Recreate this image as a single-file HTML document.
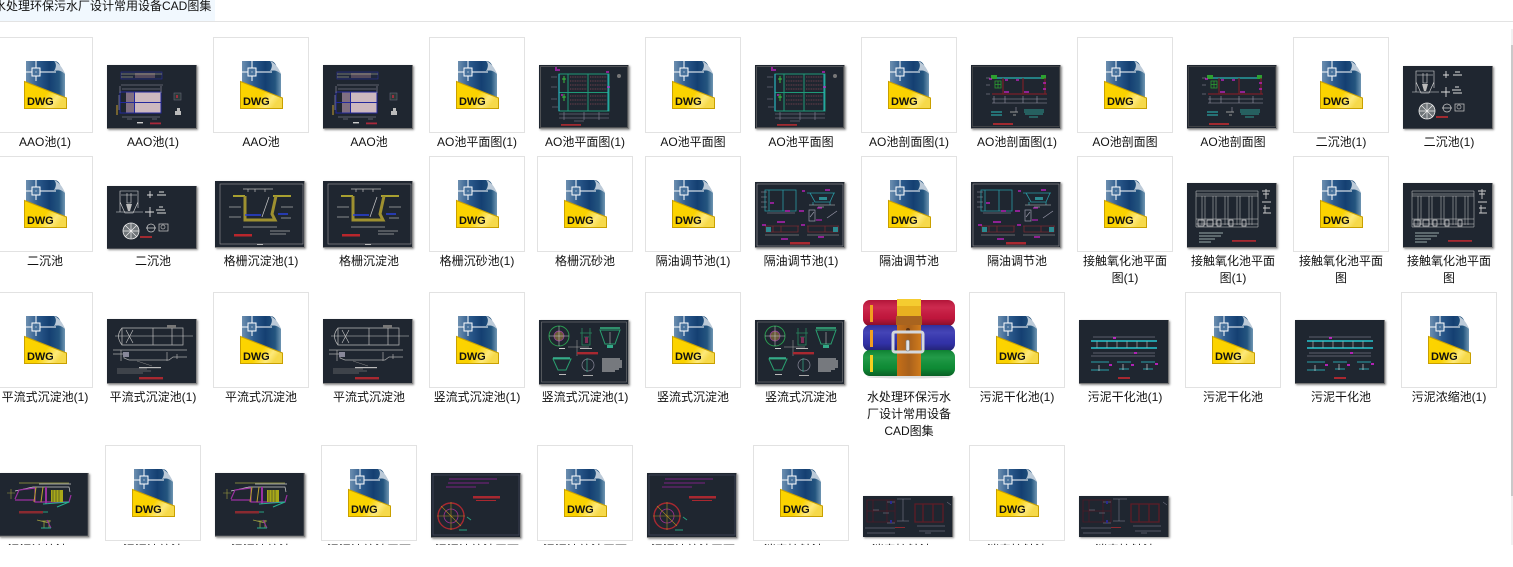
<!DOCTYPE html>
<html lang="zh"><head><meta charset="utf-8"><title>水处理环保污水厂设计常用设备CAD图集</title>
<style>
html,body{margin:0;padding:0;width:1513px;height:567px;overflow:hidden;background:#fff}
body{position:relative;font-family:"Liberation Sans","Noto Sans CJK SC",sans-serif;font-size:12px;color:#000}
#tab{position:absolute;left:0;top:0;width:215px;height:21px;background:#f1f8fe;overflow:hidden}
#tab span{position:absolute;left:-6px;top:-2px;line-height:17px;white-space:nowrap;color:#111}
#line{position:absolute;left:0;top:21px;width:1513px;height:1px;background:#e3e3e3}
#view{position:absolute;left:0;top:22px;width:1511px;height:523px;overflow:hidden}
#in{position:absolute;left:0;top:-22px;width:1511px;height:545px;overflow:hidden}
.c{position:absolute;width:94px;height:94px;border:1px solid #e2e2e2;background:#fff}
.c svg{position:absolute;left:26px;top:23px;width:43px;height:48px}
.t{position:absolute;width:90px;height:64px;box-shadow:1px 1px 2px rgba(0,0,0,.45);filter:blur(.3px);display:block}
.l{position:absolute;width:108px;margin-top:1px;text-align:center;line-height:17px;white-space:nowrap;color:#111}
.e{height:4px;overflow:hidden}
#sb1{position:absolute;left:1511px;top:29px;width:2px;height:516px;background:#f1f1f1}
#sb2{position:absolute;left:1511px;top:45px;width:2px;height:451px;background:#c9c9c9}
#rar{position:absolute;left:861px;top:296px;width:96px;height:86px}
</style></head><body>
<svg width="0" height="0" style="position:absolute"><defs>
<linearGradient id="bl" x1="0" y1="0" x2="1" y2="0"><stop offset="0" stop-color="#6d8fb0"/><stop offset=".3" stop-color="#2c5a8c"/><stop offset=".6" stop-color="#143f72"/><stop offset=".85" stop-color="#24557f"/><stop offset="1" stop-color="#6f96b2"/></linearGradient>
<linearGradient id="ye" x1="0" y1="0" x2="1" y2=".5"><stop offset="0" stop-color="#fdd400"/><stop offset=".6" stop-color="#fad200"/><stop offset=".85" stop-color="#fde97a"/><stop offset="1" stop-color="#f6d94a"/></linearGradient>
<linearGradient id="cy" x1="0" y1="0" x2="0" y2="1"><stop offset="0" stop-color="#000" stop-opacity=".12"/><stop offset=".3" stop-color="#fff" stop-opacity=".08"/><stop offset=".7" stop-color="#000" stop-opacity=".05"/><stop offset="1" stop-color="#000" stop-opacity=".35"/></linearGradient>
<linearGradient id="be" x1="0" y1="0" x2="1" y2="0"><stop offset="0" stop-color="#c66f17"/><stop offset=".5" stop-color="#a9611c"/><stop offset="1" stop-color="#d07b1c"/></linearGradient>
<g id="d">
<path d="M2 0H30C34 0 36 3 37 7C38 9 40 10 41 13V36H2Z" fill="url(#bl)"/>
<path d="M30 0C34 1 39 7 41 13C37 9 33 9 30 10C32 7 33 3 30 0Z" fill="#bccad8"/>
<path d="M12 0V7M12 15V20M2 11H8M16 11H32" stroke="#fff" stroke-width="1"/>
<rect x="8" y="7" width="8" height="8" fill="#48729c" stroke="#fff" stroke-width="1"/><rect x="11.500" y="10.500" width="1" height="1" fill="#fff"/>
<path d="M.5 20.500L42.500 37V47.500H.5Z" fill="url(#ye)" stroke="#c9a000"/>
<text x="3" y="44" font-family="Liberation Sans" font-weight="700" font-size="11" fill="#111" letter-spacing="-.1">DWG</text>
</g>
<g id="aao"><rect width="90" height="64" fill="#1f2630"/><path d="M89.500 0V63.500H0" stroke="#777" fill="none"/>
<rect x="14" y="7" width="41" height="7" fill="#20283c" stroke="#2b2f9a" stroke-width=".6"/><path d="M29 8v5M31 8v5M33 8v5M35 8v5M37 8v5M39 8v5M41 8v5M43 8v5M45 8v5M47 8v5" stroke="#b58a96" stroke-width=".7"/><path d="M14 9h41M14 12h12" stroke="#c9c9a0" stroke-width=".5"/>
<rect x="19" y="27" width="9" height="21" fill="#806f82"/><rect x="28" y="27" width="26" height="21" fill="#cdb9bf"/><path d="M13 27H54V48H13ZM13 37.500H54M27.500 27V48" stroke="#23289c" fill="none"/>
<path d="M14 20h42M15 24h38M15 52h38M13 21v7M54 21v7M20 54h5M45 54h5M12 30v15" stroke="#99a" stroke-width=".6"/><path d="M10 40v10" stroke="#c9a030"/>
<rect x="67" y="28" width="7" height="7" fill="#2c3a3a" stroke="#667" stroke-width=".6"/><rect x="69" y="30" width="2" height="3" fill="#9a3040"/><path d="M68 46h6v4h-6zM70 43h3v3h-3z" fill="#bbb"/>
<rect x="30" y="57" width="6" height="1.400" fill="#ccc"/><rect x="43" y="57.500" width="11" height="1.800" fill="#a8283a"/></g>
<g id="aop"><rect width="90" height="64" fill="#1f2630"/><rect x="1.500" y="1.500" width="87" height="61" fill="none" stroke="#666" stroke-width=".7"/><path d="M89.500 0V63.500H0" stroke="#888" fill="none"/>
<path d="M20 9H70V46H20ZM29 9V46M49 9V46M20 27.500H70" stroke="#1f9a78" fill="none" stroke-width="1"/>
<path d="M31 12h17M31 16h17M31 20h17M31 24h17M31 31h17M31 35h17M31 39h17M51 12h17M51 16h17M51 20h17M51 24h17M51 31h17M51 35h17M51 39h17" stroke="#8a4a55" stroke-width=".7" stroke-dasharray="1 .7"/>
<path d="M20 9v37" stroke="#29b5c0" stroke-width="1.200"/><path d="M23 14h4M25 11v7M23 32h4M25 29v7" stroke="#38c040"/><path d="M69 9v37" stroke="#29b5c0"/>
<path d="M16 5h5M67 7h3M68 22h3M22 30h2M16 3h2" stroke="#d020d0" stroke-width="1.200"/><path d="M12 12h6M12 22h6M12 34h6M13 42h6M20 49h50M20 53h50M25 47v8M45 47v8M60 47v8M35 56h10" stroke="#889" stroke-width=".6"/>
<rect x="22" y="59" width="20" height="1.800" fill="#a02a30"/><circle cx="80" cy="11" r="2" fill="#777"/></g>
<g id="aos"><rect width="90" height="64" fill="#1f2630"/><rect x="1.500" y="1.500" width="87" height="60" fill="none" stroke="#555" stroke-width=".6"/><path d="M89.500 0V63.500H0" stroke="#888" fill="none"/>
<path d="M21 13H75" stroke="#27b5b5" stroke-width="1.200"/><rect x="20" y="10" width="6" height="4" fill="#2da030"/><rect x="70" y="10" width="5" height="4" fill="#2da030"/><path d="M24 16h6v7h-6zM24 19.500h6M27 16v7" stroke="#2da030" fill="none" stroke-width=".8"/>
<path d="M21 29H76M32 13V29M52 13V29M74 13V29" stroke="#7a1f28" stroke-width="1.200"/><path d="M18 14h3M34 15h3M45 15h3M33 27h5M53 27h5M72 18h3M72 24h3" stroke="#d020d0" stroke-width="1.200"/>
<path d="M21 34H76M21 38H76M23 31v7M34 31v7M52 31v7M66 31v7M42 38h10M15 13h4M15 20h4M15 29h4M45 42v5" stroke="#99a" stroke-width=".6"/>
<path d="M20 47h11M20 50h11" stroke="#29a0a0" stroke-width="1.300"/><path d="M39 47h8M42 50h3" stroke="#999"/><path d="M53 45h20M53 47h20M54 49h18M58 52h9" stroke="#2c9a90" stroke-width=".9"/><rect x="22" y="58" width="20" height="2" fill="#a02a30"/></g>
<g id="ec"><rect width="90" height="63" fill="#1f2630"/><path d="M89.500 0V63H0" stroke="#777" fill="none"/>
<path d="M13 5H31V16L26 27H18L13 16ZM20 7V17H24V7M14 9H30M9 26H36M13 5V26M31 5V22" stroke="#ddd" stroke-width=".6" fill="none"/><path d="M19 18h6l-2 7h-2z" fill="#bbb"/>
<circle cx="24" cy="45" r="8" fill="#6e7478" stroke="#eee" stroke-width=".8"/><path d="M16 45h16M24 37v16M18 39l12 12M30 39l-12 12" stroke="#eee" stroke-width=".7"/>
<path d="M40 9h6M43 5v7M50 9h9M52 6h5M38 26h9M43 21v10M49 24h9M50 27h9M52 21h4" stroke="#ddd" stroke-width=".9"/><circle cx="44" cy="42" r="4" fill="none" stroke="#ccc" stroke-width=".7"/><path d="M39 42h10" stroke="#ddd" stroke-width=".7"/><rect x="52" y="38" width="9" height="7" fill="none" stroke="#ccc" stroke-width=".7"/><circle cx="56" cy="41" r="2" fill="none" stroke="#bbb" stroke-width=".7"/>
<rect x="33" y="50" width="12" height="2" fill="#a02a30"/></g>
<g id="gs"><rect width="90" height="67" fill="#1f2630"/><rect x="5" y="3" width="83" height="60" fill="none" stroke="#999" stroke-width=".6"/><path d="M89.500 0V66.500H0" stroke="#888" fill="none"/>
<path d="M18 15H30M58 15H76" stroke="#a8a030" stroke-width="2"/><path d="M30 15V39H60L57 33L61 15" fill="none" stroke="#9e9030" stroke-width="3"/><path d="M32 17V36H48L55 28V17" fill="#1f2630"/>
<path d="M28 8h30M33 8v3M40 8v3M50 8v3" stroke="#bbb" stroke-width=".7"/><path d="M30 34H46M63 33h10" stroke="#2840d8" stroke-width="1.500"/><path d="M54 16L47 36" stroke="#ccc" stroke-width=".7"/><path d="M14 26h12M14 36h12M66 26h12M66 37h10M28 46h34M55 50h20M55 53h16" stroke="#aaa" stroke-width=".7"/><rect x="19" y="53" width="18" height="2.500" fill="#b8262c"/><rect x="42" y="63" width="6" height="1" fill="#bbb"/></g>
<g id="gy"><rect width="90" height="66" fill="#1f2630"/><rect x="2" y="2" width="86" height="62" fill="none" stroke="#999" stroke-width=".6"/><path d="M89.500 0V65.500H0" stroke="#888" fill="none"/>
<path d="M10 8H41V29H10ZM28 8V29M14 8V29" stroke="#2a9aa5" fill="none" stroke-width=".8"/><path d="M6 10h6M6 15h6M6 20h6M6 25h6M12 31h28" stroke="#99a" stroke-width=".6"/><path d="M15 21h4M30 29h5M44 29h5M47 9h3M70 8h5M22 40h8" stroke="#d020d0" stroke-width="1.200"/>
<path d="M52 11H80M55 11L60 20H75L79 11M58 20v3M75 20v3" stroke="#2a9aa5" fill="none" stroke-width=".8"/><rect x="64" y="15" width="8" height="3" fill="#2c8a90"/><path d="M54 23H80M63 25h6" stroke="#ccc" stroke-width=".5"/><path d="M62 26h5" stroke="#d020d0"/>
<path d="M54 28h6v11h-6zM55 35l4-5M72 36l10-7" stroke="#99a" fill="none" stroke-width=".7"/><path d="M61 38h6" stroke="#d020d0"/>
<path d="M10 44H44M11 44V50H43V44M18 44V50M26 44V50M52 44H84M53 44V50H83V44M70 44V50" stroke="#7a2a30" fill="none" stroke-width=".8"/><path d="M11 45h5v5h-5zM78 45h5v5h-5z" fill="#2c8a90"/><path d="M10 53H44M52 53H84" stroke="#aaa" stroke-width=".6"/><path d="M26 57h7M63 55h6M7 43h4M46 43h4" stroke="#d020d0" stroke-width="1.200"/><rect x="35" y="60" width="20" height="2.500" fill="#a82830"/></g>
<g id="jc"><rect width="90" height="65" fill="#1f2630"/><path d="M89.500 0V64.500H0" stroke="#888" fill="none"/>
<path d="M9 8H71V44H9ZM9 11H71M9 13H71M15 13V42M18 13V42M26 13V42M29 13V42M38 13V42M41 13V42M50 13V42M53 13V42M62 13V42M65 13V42M9 36H71M9 41H71" stroke="#ccc" stroke-width=".5" fill="none"/><path d="M11 37h6v6h-6zM20 37h6v6h-6zM30 37h4v6h-4zM42 37h4v6h-4zM55 37h4v6h-4z" stroke="#ddd" fill="none" stroke-width=".7"/>
<path d="M75 8h8M79 6v10M76 11h6M75 19h9M76 25h7M76 30h8M78 22v8" stroke="#ccc" stroke-width=".9"/><path d="M12 50H36M12 53H34M12 56H28M12 59H24" stroke="#9aa" stroke-width="1"/><rect x="45" y="57" width="24" height="1.800" fill="#a82830"/></g>
<g id="pl"><rect width="90" height="65" fill="#1f2630"/><path d="M89.500 0V64.500H0" stroke="#888" fill="none"/>
<path d="M15 9H65V26H15ZM15 9Q8 17 15 26M65 9H76V26H65M46 9V26" stroke="#bbb" fill="none" stroke-width=".7"/><path d="M19 11L26 24M26 11L19 24M8 17H86" stroke="#ccc" stroke-width=".6"/><rect x="60" y="6" width="9" height="3" fill="#777"/>
<path d="M6 35H17V39L22 41H62L66 38H80M6 31H80M14 31V42M60 33V42M70 35V40" stroke="#aaa" fill="none" stroke-width=".7"/><path d="M16 33h6v5h-6z" fill="#889"/><path d="M30 42L45 47" stroke="#888" stroke-width=".5"/>
<rect x="32" y="48" width="22" height="1.200" fill="#bbb"/><path d="M10 50H40M10 52H44M10 54H36" stroke="#999" stroke-width=".6"/><rect x="32" y="58" width="24" height="2.400" fill="#a82830"/></g>
<g id="sl"><rect width="90" height="65" fill="#1f2630"/><rect x="2.500" y="2" width="85" height="60" fill="none" stroke="#888" stroke-width=".5"/><path d="M89.500 0V64.500H0" stroke="#888" fill="none"/>
<circle cx="20" cy="16" r="10" fill="none" stroke="#2a9a50" stroke-width="1"/><circle cx="20" cy="16" r="5" fill="#6a5a38" stroke="#9a40a0" stroke-width=".7"/><path d="M10 16H30M20 6V26" stroke="#ccc" stroke-width=".5"/><rect x="20" y="28" width="6" height="1" fill="#ccc"/>
<path d="M43 8V25H51V8M41 13H53M45 17H50" stroke="#2a8a60" fill="none" stroke-width=".8"/><path d="M46 17h3v6h-3z" fill="#803058"/><rect x="41" y="28" width="12" height="1" fill="#bbb"/>
<path d="M61 10H81L76 24H66Z" fill="none" stroke="#2aa070" stroke-width="1"/><path d="M61 8H81" stroke="#36b080" stroke-width="1.600"/><path d="M71 12V24" stroke="#bbb" stroke-width=".6"/><path d="M68 25h6v3h-6z" fill="#3a8"/>
<path d="M29 27H50M38 20V36" stroke="#aaa" stroke-width=".5"/><rect x="38" y="32" width="21" height="2.400" fill="#a82830"/>
<path d="M14 39H32L27 50H19Z" fill="none" stroke="#2aa070" stroke-width="1"/><path d="M14 38H31" stroke="#38b090" stroke-width="1.600"/><rect x="20" y="54" width="7" height="1" fill="#bbb"/>
<circle cx="49" cy="45" r="6" fill="none" stroke="#889" stroke-width=".7"/><path d="M48 38V52" stroke="#3a8" stroke-width=".7"/><rect x="44" y="55" width="10" height="1" fill="#aaa"/>
<path d="M63 39H81M63 41H83M63 43H83M63 45H83M63 47H83M63 49H80M63 51H76" stroke="#ccc" stroke-width=".9"/></g>
<g id="gh"><rect width="90" height="64" fill="#1f2630"/><path d="M89.500 0V63.500H0" stroke="#777" fill="none"/>
<path d="M12 21H78M12 28H78" stroke="#27c5d0" stroke-width="1.500"/><path d="M18 21v7M28 21v7M38 21v7M48 21v7M58 21v7M68 21v7" stroke="#aaa" stroke-width=".7"/><path d="M14 17h62M14 33h62M12 36h64" stroke="#99a" stroke-width=".5"/><path d="M12 42h18M12 50h18M38 42h14M40 49h10M62 42h14M64 49h10" stroke="#29a0a8" stroke-width=".9"/>
<path d="M20 45v6M44 44v6M68 44v6" stroke="#ccc" stroke-width=".7"/><path d="M34 18h3M55 33h3M30 45h3M52 45h3M76 44h3" stroke="#e020e0" stroke-width="1.500"/><rect x="39" y="57" width="12" height="2" fill="#a82830"/></g>
<g id="wn"><rect width="90" height="64" fill="#1f2630"/><path d="M89.500 0V63.500H0" stroke="#888" stroke-width="1.500" fill="none"/>
<path d="M20 10H70" stroke="#a0a040" stroke-width=".7"/><path d="M40 11H72M16 18L34 14H70L71 19" stroke="#ccc" fill="none" stroke-width=".7"/><path d="M16 26L20 17L36 15M36 15L36 29H70L72 22M16 27H36" stroke="#9a30a0" fill="none" stroke-width="1.200"/><rect x="52" y="17" width="12" height="12" fill="#a8a818"/><path d="M54 17v12M57 17v12M60 17v12" stroke="#1f2630" stroke-width=".5"/><path d="M37 14L35 29M44 14L42 29" stroke="#bba030"/><path d="M47 14V31" stroke="#9a30a0" stroke-width="2"/><path d="M44 31L70 29L58 34" stroke="#27b090" fill="none"/><path d="M12 16V26M8 20h8" stroke="#a0a040" stroke-width=".6"/>
<rect x="20" y="38" width="24" height="2.500" fill="#8a2a30"/><path d="M44 39h5" stroke="#27a080"/><path d="M38 47L50 50M42 48H52M45 49V55M50 47V55" stroke="#a0a040" stroke-width=".8"/><path d="M48 47l4 8" stroke="#9a30a0"/><path d="M42 55H52" stroke="#27b090"/></g>
<g id="wp"><rect width="90" height="65" fill="#1f2630"/><rect x="2" y="2" width="86" height="60" fill="none" stroke="#444a60" stroke-width=".7"/><path d="M89.500 0V64.500H0" stroke="#888" fill="none"/>
<circle cx="20" cy="43" r="13" fill="none" stroke="#a82830" stroke-width="1.400"/><circle cx="20" cy="43" r="7" fill="none" stroke="#a03090" stroke-width=".8"/><path d="M20 29V57M6 43H34M10 33L30 53" stroke="#b09020" stroke-width=".6"/><path d="M17 10L58 10M15 14L45 14M18 6H66" stroke="#9a20a0" stroke-width=".8"/><path d="M36 44l4 3M28 57h8" stroke="#27a080"/><rect x="42" y="23" width="27" height="2.500" fill="#a82830"/><rect x="45" y="27" width="20" height="1" fill="#a82830"/></g>
<g id="xd"><rect width="90" height="41" fill="#1f2630"/><path d="M89.500 0V41" stroke="#666" fill="none"/>
<path d="M4 4H32V26H4ZM10 4V26M24 4V26M4 15H32" stroke="#4e1a26" fill="none" stroke-width=".8"/><path d="M52 8H80V26H52ZM60 8V26M70 8V26" stroke="#5e1c26" fill="none" stroke-width="1.300"/><path d="M10 14h6M20 17h6M24 6h8M24 27h8M40 3V25M34 3h14M34 25h12M54 30h28M56 35h26M2 32h30M4 37h28M62 37h6M84 6l4 3" stroke="#889" stroke-width=".5"/><rect x="32" y="31" width="10" height="1" fill="#8a2a30"/><rect x="27" y="5" width="2" height="3" fill="#2a2a90"/><rect x="27" y="24" width="2" height="3" fill="#2a2a90"/></g>
</defs></svg>

<div id="tab"><span>水处理环保污水厂设计常用设备CAD图集</span></div>
<div id="line"></div>
<div id="view"><div id="in">
<!-- row 1 -->
<div class="c" style="left:-3px;top:37px"><svg viewBox="0 0 43 48"><use href="#d"/></svg></div><div class="l" style="left:-9px;top:133px">AAO池(1)</div>
<svg class="t" style="left:107px;top:65px" viewBox="0 0 90 64" preserveAspectRatio="none"><use href="#aao"/></svg><div class="l" style="left:99px;top:133px">AAO池(1)</div>
<div class="c" style="left:213px;top:37px"><svg viewBox="0 0 43 48"><use href="#d"/></svg></div><div class="l" style="left:207px;top:133px">AAO池</div>
<svg class="t" style="left:323px;top:65px" viewBox="0 0 90 64" preserveAspectRatio="none"><use href="#aao"/></svg><div class="l" style="left:315px;top:133px">AAO池</div>
<div class="c" style="left:429px;top:37px"><svg viewBox="0 0 43 48"><use href="#d"/></svg></div><div class="l" style="left:423px;top:133px">AO池平面图(1)</div>
<svg class="t" style="left:539px;top:65px" viewBox="0 0 90 64" preserveAspectRatio="none"><use href="#aop"/></svg><div class="l" style="left:531px;top:133px">AO池平面图(1)</div>
<div class="c" style="left:645px;top:37px"><svg viewBox="0 0 43 48"><use href="#d"/></svg></div><div class="l" style="left:639px;top:133px">AO池平面图</div>
<svg class="t" style="left:755px;top:65px" viewBox="0 0 90 64" preserveAspectRatio="none"><use href="#aop"/></svg><div class="l" style="left:747px;top:133px">AO池平面图</div>
<div class="c" style="left:861px;top:37px"><svg viewBox="0 0 43 48"><use href="#d"/></svg></div><div class="l" style="left:855px;top:133px">AO池剖面图(1)</div>
<svg class="t" style="left:971px;top:65px" viewBox="0 0 90 64" preserveAspectRatio="none"><use href="#aos"/></svg><div class="l" style="left:963px;top:133px">AO池剖面图(1)</div>
<div class="c" style="left:1077px;top:37px"><svg viewBox="0 0 43 48"><use href="#d"/></svg></div><div class="l" style="left:1071px;top:133px">AO池剖面图</div>
<svg class="t" style="left:1187px;top:65px" viewBox="0 0 90 64" preserveAspectRatio="none"><use href="#aos"/></svg><div class="l" style="left:1179px;top:133px">AO池剖面图</div>
<div class="c" style="left:1293px;top:37px"><svg viewBox="0 0 43 48"><use href="#d"/></svg></div><div class="l" style="left:1287px;top:133px">二沉池(1)</div>
<svg class="t" style="left:1403px;top:66px;height:63px" viewBox="0 0 90 63" preserveAspectRatio="none"><use href="#ec"/></svg><div class="l" style="left:1395px;top:133px">二沉池(1)</div>
<!-- row 2 -->
<div class="c" style="left:-3px;top:156px"><svg viewBox="0 0 43 48"><use href="#d"/></svg></div><div class="l" style="left:-9px;top:252px">二沉池</div>
<svg class="t" style="left:107px;top:186px;height:63px" viewBox="0 0 90 63" preserveAspectRatio="none"><use href="#ec"/></svg><div class="l" style="left:99px;top:252px">二沉池</div>
<svg class="t" style="left:215px;top:181px;height:67px" viewBox="0 0 90 67" preserveAspectRatio="none"><use href="#gs"/></svg><div class="l" style="left:207px;top:252px">格栅沉淀池(1)</div>
<svg class="t" style="left:323px;top:181px;height:67px" viewBox="0 0 90 67" preserveAspectRatio="none"><use href="#gs"/></svg><div class="l" style="left:315px;top:252px">格栅沉淀池</div>
<div class="c" style="left:429px;top:156px"><svg viewBox="0 0 43 48"><use href="#d"/></svg></div><div class="l" style="left:423px;top:252px">格栅沉砂池(1)</div>
<div class="c" style="left:537px;top:156px"><svg viewBox="0 0 43 48"><use href="#d"/></svg></div><div class="l" style="left:531px;top:252px">格栅沉砂池</div>
<div class="c" style="left:645px;top:156px"><svg viewBox="0 0 43 48"><use href="#d"/></svg></div><div class="l" style="left:639px;top:252px">隔油调节池(1)</div>
<svg class="t" style="left:755px;top:182px;height:66px" viewBox="0 0 90 66" preserveAspectRatio="none"><use href="#gy"/></svg><div class="l" style="left:747px;top:252px">隔油调节池(1)</div>
<div class="c" style="left:861px;top:156px"><svg viewBox="0 0 43 48"><use href="#d"/></svg></div><div class="l" style="left:855px;top:252px">隔油调节池</div>
<svg class="t" style="left:971px;top:182px;height:66px" viewBox="0 0 90 66" preserveAspectRatio="none"><use href="#gy"/></svg><div class="l" style="left:963px;top:252px">隔油调节池</div>
<div class="c" style="left:1077px;top:156px"><svg viewBox="0 0 43 48"><use href="#d"/></svg></div><div class="l" style="left:1071px;top:252px">接触氧化池平面<br>图(1)</div>
<svg class="t" style="left:1187px;top:183px;height:65px" viewBox="0 0 90 65" preserveAspectRatio="none"><use href="#jc"/></svg><div class="l" style="left:1179px;top:252px">接触氧化池平面<br>图(1)</div>
<div class="c" style="left:1293px;top:156px"><svg viewBox="0 0 43 48"><use href="#d"/></svg></div><div class="l" style="left:1287px;top:252px">接触氧化池平面<br>图</div>
<svg class="t" style="left:1403px;top:183px;height:65px" viewBox="0 0 90 65" preserveAspectRatio="none"><use href="#jc"/></svg><div class="l" style="left:1395px;top:252px">接触氧化池平面<br>图</div>
<!-- row 3 -->
<div class="c" style="left:-3px;top:292px"><svg viewBox="0 0 43 48"><use href="#d"/></svg></div><div class="l" style="left:-9px;top:388px">平流式沉淀池(1)</div>
<svg class="t" style="left:107px;top:319px;height:65px" viewBox="0 0 90 65" preserveAspectRatio="none"><use href="#pl"/></svg><div class="l" style="left:99px;top:388px">平流式沉淀池(1)</div>
<div class="c" style="left:213px;top:292px"><svg viewBox="0 0 43 48"><use href="#d"/></svg></div><div class="l" style="left:207px;top:388px">平流式沉淀池</div>
<svg class="t" style="left:323px;top:319px;height:65px" viewBox="0 0 90 65" preserveAspectRatio="none"><use href="#pl"/></svg><div class="l" style="left:315px;top:388px">平流式沉淀池</div>
<div class="c" style="left:429px;top:292px"><svg viewBox="0 0 43 48"><use href="#d"/></svg></div><div class="l" style="left:423px;top:388px">竖流式沉淀池(1)</div>
<svg class="t" style="left:539px;top:320px;height:65px" viewBox="0 0 90 65" preserveAspectRatio="none"><use href="#sl"/></svg><div class="l" style="left:531px;top:388px">竖流式沉淀池(1)</div>
<div class="c" style="left:645px;top:292px"><svg viewBox="0 0 43 48"><use href="#d"/></svg></div><div class="l" style="left:639px;top:388px">竖流式沉淀池</div>
<svg class="t" style="left:755px;top:320px;height:65px" viewBox="0 0 90 65" preserveAspectRatio="none"><use href="#sl"/></svg><div class="l" style="left:747px;top:388px">竖流式沉淀池</div>
<svg id="rar" viewBox="0 0 96 86">
<ellipse cx="48" cy="81" rx="42" ry="1.500" fill="#ddd"/>
<rect x="2" y="4" width="92" height="26" rx="7" fill="#c9173f"/><rect x="2" y="4" width="92" height="26" rx="7" fill="url(#cy)"/>
<rect x="2" y="29" width="92" height="26" rx="7" fill="#3434b0"/><rect x="2" y="29" width="92" height="26" rx="7" fill="url(#cy)"/>
<rect x="2" y="54" width="92" height="26" rx="7" fill="#0f9238"/><rect x="2" y="54" width="92" height="26" rx="7" fill="url(#cy)"/>
<rect x="9" y="9" width="3" height="17" fill="#f0a020"/><rect x="9" y="34" width="3" height="17" fill="#f0a020"/><rect x="9" y="59" width="3" height="17" fill="#f5d020"/>
<rect x="36" y="14" width="24" height="66" fill="url(#be)"/><path d="M36 3H60V22H36Z" fill="#e8b020"/><path d="M36 3H60V10H36Z" fill="#f5cc30"/><rect x="35" y="20" width="26" height="9" fill="#a9641f"/><circle cx="47" cy="34" r="2" fill="#5a3010"/>
<rect x="32" y="36" width="30" height="20" rx="2" fill="none" stroke="#d5d8dc" stroke-width="3"/><rect x="45" y="44" width="3.500" height="11" rx="1.500" fill="#dfe2e6" stroke="#777" stroke-width=".6"/>
</svg>
<div class="l" style="left:855px;top:388px">水处理环保污水<br>厂设计常用设备<br>CAD图集</div>
<div class="c" style="left:969px;top:292px"><svg viewBox="0 0 43 48"><use href="#d"/></svg></div><div class="l" style="left:963px;top:388px">污泥干化池(1)</div>
<svg class="t" style="left:1079px;top:320px" viewBox="0 0 90 64" preserveAspectRatio="none"><use href="#gh"/></svg><div class="l" style="left:1071px;top:388px">污泥干化池(1)</div>
<div class="c" style="left:1185px;top:292px"><svg viewBox="0 0 43 48"><use href="#d"/></svg></div><div class="l" style="left:1179px;top:388px">污泥干化池</div>
<svg class="t" style="left:1295px;top:320px" viewBox="0 0 90 64" preserveAspectRatio="none"><use href="#gh"/></svg><div class="l" style="left:1287px;top:388px">污泥干化池</div>
<div class="c" style="left:1401px;top:292px"><svg viewBox="0 0 43 48"><use href="#d"/></svg></div><div class="l" style="left:1395px;top:388px">污泥浓缩池(1)</div>
<!-- row 4 -->
<svg class="t" style="left:-1px;top:473px" viewBox="0 0 90 64" preserveAspectRatio="none"><use href="#wn"/></svg><div class="l e" style="left:-9px;top:541px">污泥浓缩池(1)</div>
<div class="c" style="left:105px;top:445px"><svg viewBox="0 0 43 48"><use href="#d"/></svg></div><div class="l e" style="left:99px;top:541px">污泥浓缩池</div>
<svg class="t" style="left:215px;top:473px" viewBox="0 0 90 64" preserveAspectRatio="none"><use href="#wn"/></svg><div class="l e" style="left:207px;top:541px">污泥浓缩池</div>
<div class="c" style="left:321px;top:445px"><svg viewBox="0 0 43 48"><use href="#d"/></svg></div><div class="l e" style="left:315px;top:541px">污泥浓缩池平面</div>
<svg class="t" style="left:431px;top:473px;height:65px" viewBox="0 0 90 65" preserveAspectRatio="none"><use href="#wp"/></svg><div class="l e" style="left:423px;top:541px">污泥浓缩池平面</div>
<div class="c" style="left:537px;top:445px"><svg viewBox="0 0 43 48"><use href="#d"/></svg></div><div class="l e" style="left:531px;top:541px">污泥浓缩池平面</div>
<svg class="t" style="left:647px;top:473px;height:65px" viewBox="0 0 90 65" preserveAspectRatio="none"><use href="#wp"/></svg><div class="l e" style="left:639px;top:541px">污泥浓缩池平面</div>
<div class="c" style="left:753px;top:445px"><svg viewBox="0 0 43 48"><use href="#d"/></svg></div><div class="l e" style="left:747px;top:541px">消毒接触池(1)</div>
<svg class="t" style="left:863px;top:496px;height:41px" viewBox="0 0 90 41" preserveAspectRatio="none"><use href="#xd"/></svg><div class="l e" style="left:855px;top:541px">消毒接触池(1)</div>
<div class="c" style="left:969px;top:445px"><svg viewBox="0 0 43 48"><use href="#d"/></svg></div><div class="l e" style="left:963px;top:541px">消毒接触池</div>
<svg class="t" style="left:1079px;top:496px;height:41px" viewBox="0 0 90 41" preserveAspectRatio="none"><use href="#xd"/></svg><div class="l e" style="left:1071px;top:541px">消毒接触池</div>
</div></div>
<div id="sb1"></div><div id="sb2"></div>
</body></html>
